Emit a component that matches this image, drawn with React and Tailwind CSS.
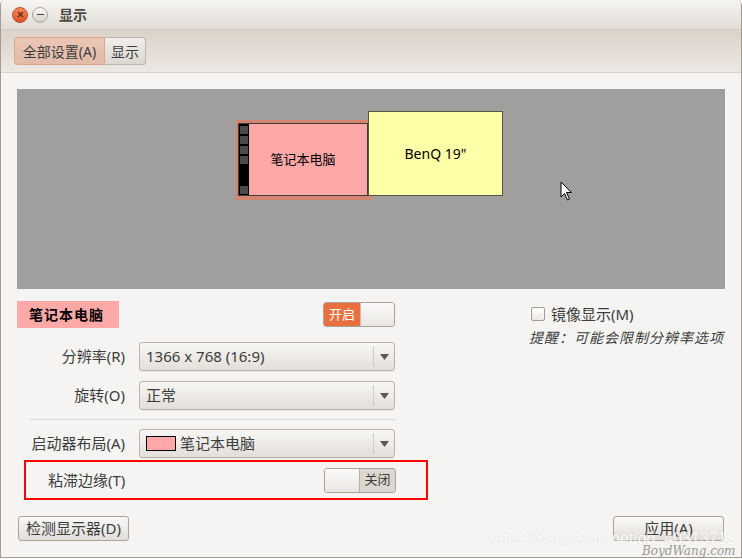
import React from "react";

const FONT = { fontFamily: '"Noto Sans", "Noto Sans CJK SC", sans-serif' };

const Combo = ({ children }) => (
    <div className="flex items-center h-[29px] w-[256px] rounded-[3px] border border-[#b9b3ab] bg-gradient-to-b from-[#f8f7f5] to-[#e3dfda] shadow-[0_1px_0_rgba(0,0,0,0.05)]">
        <div className="flex-1 flex items-center px-[6px] text-[15px] text-[#3c3c3c]">{children}</div>
        <div className="w-px h-[21px] bg-[#cfcac3]"></div>
        <div className="w-[20px] flex justify-center">
            <svg width="9" height="6" viewBox="0 0 9 6"><path d="M0 0 L9 0 L4.5 6 Z" fill="#5a5650" /></svg>
        </div>
    </div>
);

const Switch = ({ on }) => (
    <div className="flex h-[25px] w-[72px] rounded-[3px] border border-[#a8a29a] overflow-hidden text-[13px]">
        {on ? (
            <>
                <div className="w-[36px] flex items-center justify-center bg-[#e9703c] text-white">开启</div>
                <div className="flex-1 bg-gradient-to-b from-[#fbfaf9] to-[#e9e6e2] border-l border-[#c4bdb4]"></div>
            </>
        ) : (
            <>
                <div className="w-[35px] bg-gradient-to-b from-[#fbfaf9] to-[#e9e6e2] border-r border-[#b7b0a7]"></div>
                <div className="flex-1 flex items-center justify-center bg-[#dcd7d0] text-[#3c3c3c]">关闭</div>
            </>
        )}
    </div>
);

const Button = ({ children, w }) => (
    <div className={`${w} h-[25px] flex items-center justify-center rounded-[3px] border border-[#aaa49b] bg-gradient-to-b from-[#faf9f8] to-[#e2ded9] text-[15px] text-[#3c3c3c]`}>
        {children}
    </div>
);

export default function App() {
    return (
        <div className="relative w-[742px] h-[559px] overflow-hidden bg-white" style={FONT}>
            <div className="w-[742px] h-[558px] flex flex-col border-x border-b border-[#a49b91] rounded-t-[5px] overflow-hidden bg-[#f5f4f2]">

                {/* title bar */}
                <div className="h-[30px] flex items-center gap-[4px] px-[11px] bg-gradient-to-b from-[#f6f5f3] to-[#e1dcd5] border-b border-[#d4cbc1]">
                    <div className="w-[16px] h-[16px] rounded-full bg-gradient-to-b from-[#f58a5c] to-[#de4f1f] border border-[#b9502a] flex items-center justify-center">
                        <svg width="7" height="7" viewBox="0 0 7 7"><path d="M1 1 L6 6 M6 1 L1 6" stroke="#5a2a18" strokeWidth="1.2" /></svg>
                    </div>
                    <div className="w-[16px] h-[16px] rounded-full bg-gradient-to-b from-[#fbfaf8] to-[#d4cfc8] border border-[#a9a39b] flex items-center justify-center">
                        <div className="w-[7px] h-px bg-[#4a4640]"></div>
                    </div>
                    <span className="ml-[7px] text-[14px] font-bold text-[#4c4943]">显示</span>
                </div>

                {/* toolbar */}
                <div className="h-[43px] flex items-center px-[13px] bg-gradient-to-b from-[#dbd2c8] to-[#ece8e3] border-b border-[#d9d3cc]">
                    <div className="flex h-[28px] text-[14px] text-[#3c3c3c]">
                        <div className="w-[91px] flex items-center justify-center rounded-l-[3px] border border-[#e0a58c] bg-gradient-to-b from-[#ebc6b6] to-[#e2bba9]">全部设置(A)</div>
                        <div className="w-[41px] flex items-center justify-center rounded-r-[3px] border border-l-0 border-[#bcb5ac] bg-gradient-to-b from-[#f1efec] to-[#dcd7d1]">显示</div>
                    </div>
                </div>

                {/* content */}
                <div className="flex-1 flex flex-col px-[16px] pt-[16px]">
                    {/* monitors canvas */}
                    <div className="relative h-[200px] bg-[#a09f9d]">
                        <div className="absolute left-[219px] top-[31px] w-[136px] h-[80px] bg-[#d48570]"></div>
                        <div className="absolute left-[221px] top-[34px] w-[130px] h-[73px] flex border border-[#3d3d3d] bg-[#ffa8a8]">
                            <div className="w-[10px] h-full bg-black flex flex-col gap-[2px] pt-[2px] px-[1px]">
                                <div className="h-[8px] bg-[#4a4a4a]"></div>
                                <div className="h-[8px] bg-[#4a4a4a]"></div>
                                <div className="h-[8px] bg-[#4a4a4a]"></div>
                                <div className="h-[8px] bg-[#4a4a4a]"></div>
                                <div className="flex-1"></div>
                                <div className="h-[8px] bg-[#4a4a4a] mb-[1px]"></div>
                            </div>
                            <div className="flex-1 flex items-center justify-center pr-[10px] text-[13px] text-black">笔记本电脑</div>
                        </div>
                        <div className="absolute left-[351px] top-[22px] w-[135px] h-[85px] flex items-center justify-center border border-[#55554a] bg-[#ffffa8] text-[14px] text-black">BenQ 19"</div>
                        <svg className="absolute left-[543px] top-[92px]" width="13" height="21" viewBox="0 0 13 21">
                            <path d="M1 1 L1 16 L4.5 12.5 L7.5 19 L9.5 18 L6.5 11.5 L11.5 11.5 Z" fill="white" stroke="black" strokeWidth="1" />
                        </svg>
                    </div>

                    {/* settings */}
                    <div className="flex mt-[12px]">
                        <div className="w-[378px] flex flex-col">
                            <div className="flex items-center justify-between h-[27px]">
                                <div className="w-[102px] h-[27px] bg-[#ffa8a8] flex items-center px-[12px] text-[14px] font-bold text-black tracking-[1px]">笔记本电脑</div>
                                <Switch on />
                            </div>
                            <div className="flex items-center mt-[14px]">
                                <div className="w-[108px] text-right text-[15px] text-[#3c3c3c]">分辨率(R)</div>
                                <div className="ml-[14px]"><Combo>1366 x 768 (16:9)</Combo></div>
                            </div>
                            <div className="flex items-center mt-[10px]">
                                <div className="w-[108px] text-right text-[15px] text-[#3c3c3c]">旋转(O)</div>
                                <div className="ml-[14px]"><Combo>正常</Combo></div>
                            </div>
                            <div className="ml-[13px] mt-[9px] w-[366px] h-px bg-[#dcd8d3]"></div>
                            <div className="flex items-center mt-[9px]">
                                <div className="w-[108px] text-right text-[15px] text-[#3c3c3c]">启动器布局(A)</div>
                                <div className="ml-[14px]">
                                    <Combo>
                                        <span className="w-[30px] h-[15px] bg-[#ffa8a8] border border-black mr-[4px]"></span>
                                        笔记本电脑
                                    </Combo>
                                </div>
                            </div>
                            <div className="ml-[7px] mt-[2px] w-[404px] h-[40px] border-2 border-[#ff0000] flex items-center justify-between pl-[22px] pr-[30px]">
                                <span className="text-[15px] text-[#3c3c3c]">粘滞边缘(T)</span>
                                <div className="h-[21px] flex items-center"><Switch /></div>
                            </div>
                        </div>
                        <div className="flex-1 flex flex-col pl-[136px] pt-[2px]">
                            <div className="flex items-center gap-[6px] text-[15px] text-[#3c3c3c]">
                                <div className="w-[14px] h-[14px] rounded-[2px] border border-[#a49d94] bg-gradient-to-b from-white to-[#ebe8e4]"></div>
                                镜像显示(M)
                            </div>
                            <div className="-ml-[2px] mt-[1px] text-[14px] italic text-[#3c3c3c] whitespace-nowrap tracking-[1px]">提醒：可能会限制分辨率选项</div>
                        </div>
                    </div>

                    {/* bottom buttons */}
                    <div className="flex items-center justify-between mt-[16px]">
                        <div className="ml-[1px]"><Button w="w-[111px]">检测显示器(D)</Button></div>
                        <div className="mr-[1px]"><Button w="w-[111px]">应用(A)</Button></div>
                    </div>
                </div>
            </div>

            {/* watermark over the window */}
            <span className="absolute left-[490px] top-[527px] whitespace-nowrap text-[16px] text-[#ffffff] opacity-80 [text-shadow:0_0_1px_#c8c6c2]" style={{ fontFamily: '"Liberation Sans", sans-serif' }}>https://blog.csdn.net/qq_40313712</span>
            <span className="absolute left-[642px] top-[542px] whitespace-nowrap text-[12px] italic text-[#9a9894]" style={{ fontFamily: '"DejaVu Serif", serif' }}>BoydWang.com</span>
        </div>
    );
}
